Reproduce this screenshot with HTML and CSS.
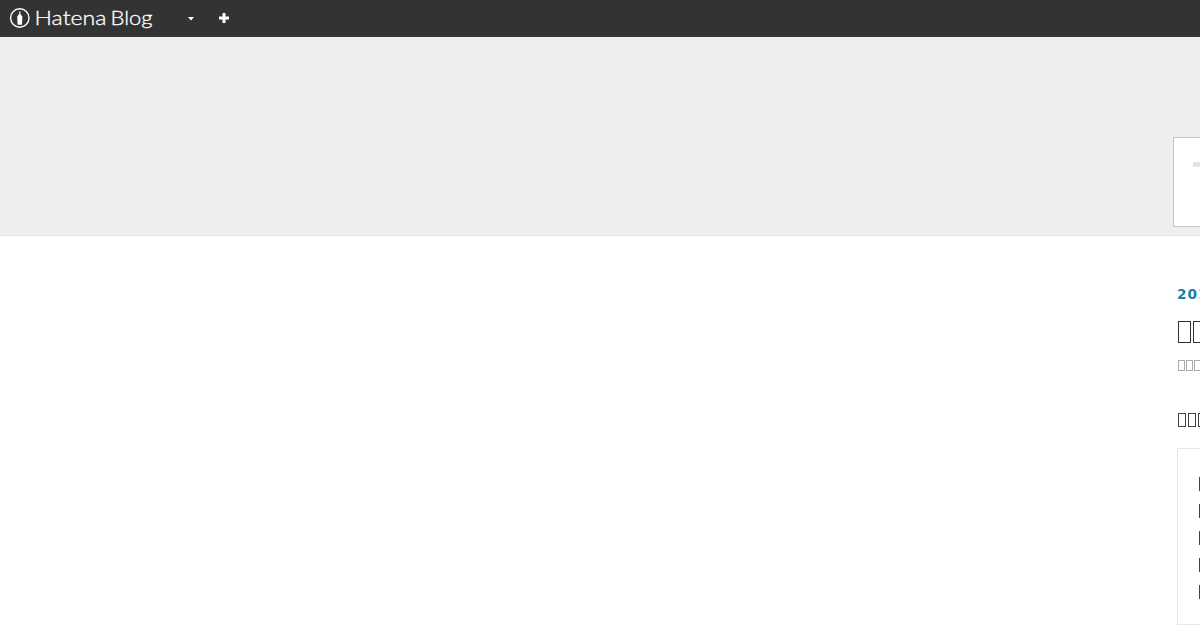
FILE: index.html
```
<!DOCTYPE html>
<html lang="ja">
<head>
    <meta charset="UTF-8">
    <meta name="viewport" content="width=device-width, initial-scale=1.0">
    <title>Hatena Blog</title>
    <link rel="stylesheet" href="styles.css">
</head>
<body>
    <header class="globalheader">
        <svg class="logo" width="154" height="37" viewBox="0 0 154 37">
            <circle cx="19.8" cy="18" r="9.2" />
            <path class="pen" d="M19.2 11.5h1.2v2.5l2 2.5-.4 8.2h-4.4l-.4-8.2 2-2.5z" />
            <text x="34.5" y="25" textLength="72" lengthAdjust="spacingAndGlyphs">Hatena</text>
            <text x="110.5" y="25" textLength="42" lengthAdjust="spacingAndGlyphs">Blog</text>
        </svg>
        <svg class="caret" width="6" height="4" viewBox="0 0 6 4"><path d="M0 0h6L3 3.5z" /></svg>
        <svg class="plus" width="10" height="10" viewBox="0 0 10 10"><path d="M3.5 0h3v3.5H10v3H6.5V10h-3V6.5H0v-3h3.5z" /></svg>
    </header>

    <div class="blog-header">
        <div class="title-box"><span class="title-bar"></span></div>
    </div>

    <main class="entry">
        <div class="date">2012</div>
        <h1 class="blocks title"><i></i><i></i></h1>
        <div class="blocks category"><i></i><i></i><i></i></div>
        <h2 class="blocks heading"><i></i><i></i><i></i></h2>
        <ul class="contents">
            <li class="blocks"><i></i></li>
            <li class="blocks"><i></i></li>
            <li class="blocks"><i></i></li>
            <li class="blocks"><i></i></li>
            <li class="blocks"><i></i></li>
        </ul>
    </main>
</body>
</html>
```
FILE: styles.css
```
/* Base */
* {
    margin: 0;
    padding: 0;
    box-sizing: border-box;
}

body {
    height: 630px;
    overflow: hidden;
    background: #fff;
    color: #333;
    font-family: "DejaVu Sans", sans-serif;
}

/* Global header */
.globalheader {
    display: flex;
    align-items: center;
    height: 37px;
    background: #333;
}

.logo circle {
    fill: none;
    stroke: #fff;
    stroke-width: 1.4;
}

.logo text {
    fill: #fff;
    stroke: #fff;
    stroke-width: 0.3;
    font-family: Lato, sans-serif;
    font-size: 20.5px;
    font-weight: 300;
}

.pen,
.caret,
.plus {
    fill: #fff;
}

.caret {
    margin-left: 33.5px;
}

.plus {
    margin: 0 0 1px 25.5px;
}

/* Blog header */
.blog-header {
    height: 199px;
    padding: 100px 0 0 1173px;
    background: #eee;
    border-bottom: 1px solid #e4e4e4;
}

.title-box {
    height: 90px;
    padding: 24px 0 0 19px;
    background: #fff;
    border: 1px solid #c4c4c4;
    border-right: 0;
}

.title-bar {
    display: block;
    height: 5px;
    background: #e2e2e2;
}

/* Entry */
.entry {
    padding: 50px 0 0 1177px;
}

.date {
    height: 16px;
    overflow: hidden;
    color: #1580a5;
    font-size: 13.6px;
    font-weight: bold;
    line-height: 17px;
    letter-spacing: 1px;
}

/* Rows of character boxes */
.blocks {
    display: flex;
    overflow: hidden;
}

.blocks i {
    flex: none;
    border: 1px solid #444;
}

.title {
    gap: 2px;
    margin: 19px 0 0 1px;
}

.title i {
    width: 13px;
    height: 22px;
    border-color: #333;
}

.category {
    gap: 1px;
    margin: 17px 0 0 1px;
}

.category i {
    width: 7px;
    height: 11px;
    border-color: #aaa;
}

.heading {
    gap: 2px;
    margin: 42px 0 0 1px;
}

.heading i {
    width: 8px;
    height: 14px;
}

.contents {
    height: 177px;
    margin-top: 21px;
    padding: 28px 0 0 21px;
    border: 1px solid #e8e8e8;
    border-right: 0;
    list-style: none;
}

.contents li {
    height: 14px;
    margin-bottom: 13px;
}

.contents i {
    width: 8px;
}
```
